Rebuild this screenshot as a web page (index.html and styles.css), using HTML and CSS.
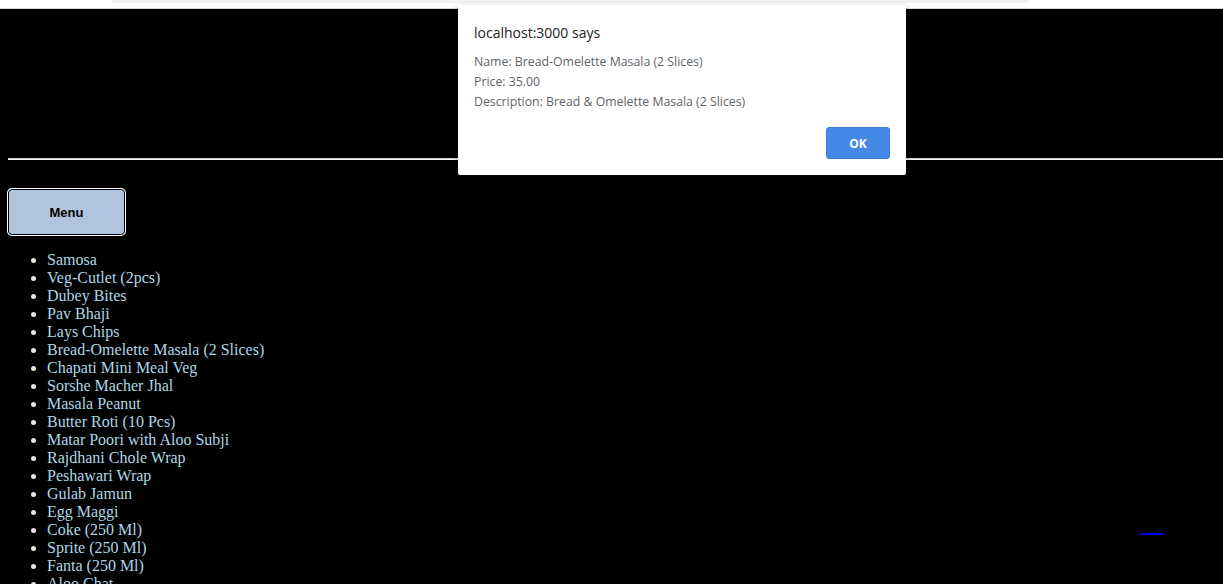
FILE: index.html
```html
<!DOCTYPE html>
<html>
<head>
<meta charset="utf-8">
<link rel="stylesheet" href="styles.css">
</head>
<body>
<div class="chrome"><div class="chrome-bar"></div></div>
<main class="page">
  <header class="header"></header>
  <hr class="rule">
  <button class="menu-btn">Menu</button>
  <ul class="items">
    <li>Samosa</li>
    <li>Veg-Cutlet (2pcs)</li>
    <li>Dubey Bites</li>
    <li>Pav Bhaji</li>
    <li>Lays Chips</li>
    <li>Bread-Omelette Masala (2 Slices)</li>
    <li>Chapati Mini Meal Veg</li>
    <li>Sorshe Macher Jhal</li>
    <li>Masala Peanut</li>
    <li>Butter Roti (10 Pcs)</li>
    <li>Matar Poori with Aloo Subji</li>
    <li>Rajdhani Chole Wrap</li>
    <li>Peshawari Wrap</li>
    <li>Gulab Jamun</li>
    <li>Egg Maggi</li>
    <li>Coke (250 Ml)</li>
    <li>Sprite (250 Ml)</li>
    <li>Fanta (250 Ml)</li>
    <li>Aloo Chat</li>
  </ul>
</main>
<a class="stray-link" href="#"></a>
<div class="dialog">
  <div class="dialog-title">localhost:3000 says</div>
  <div class="dialog-body">
    <p>Name: Bread-Omelette Masala (2 Slices)</p>
    <p>Price: 35.00</p>
    <p>Description: Bread &amp; Omelette Masala (2 Slices)</p>
  </div>
  <div class="dialog-actions"><button class="ok-btn">OK</button></div>
</div>
</body>
</html>
```
FILE: styles.css
```css
html, body {
  margin: 0;
  padding: 0;
  background: #000;
  height: 584px;
  overflow: hidden;
}
body {
  font-family: "Liberation Serif", "Times New Roman", serif;
  position: relative;
}
.chrome {
  height: 8px;
  background: #fff;
  border-bottom: 1px solid #d8d8d8;
  display: flex;
}
.chrome-bar {
  margin-left: 112px;
  width: 916px;
  height: 3px;
  background: #eff1f3;
  border-radius: 0 0 8px 8px;
}
.page {
  padding-left: 8px;
}
.header {
  height: 149px;
}
.rule {
  margin: 0;
  border: none;
  border-top: 1px solid #d0d0d0;
  border-bottom: 1px solid #f4f4f4;
  height: 0;
}
.menu-btn {
  display: block;
  margin: 29px 0 0 0;
  width: 117px;
  height: 46px;
  background: #b0c4de;
  border: 1px solid #000;
  border-radius: 4px;
  font-family: "Liberation Sans", Arial, sans-serif;
  font-weight: bold;
  font-size: 13px;
  color: #000;
  box-shadow: 0 0 0 1px #fff;
  outline: none;
}
.items {
  margin: 16px 0 0;
  padding-left: 39px;
  font-size: 16px;
  line-height: 18px;
  color: #add8e6;
}
.items li::marker {
  color: #e6e6e6;
}
.stray-link {
  position: absolute;
  left: 1139px;
  top: 533px;
  width: 25px;
  height: 2px;
  background: #0000ee;
}
.dialog {
  position: absolute;
  left: 458px;
  top: 5px;
  width: 448px;
  height: 170px;
  box-sizing: border-box;
  background: #fff;
  border-radius: 2px;
  box-shadow: 0 2px 6px rgba(0,0,0,0.3);
  padding: 20px 16px 0 16px;
  font-family: "Open Sans", "Noto Sans", sans-serif;
  display: flex;
  flex-direction: column;
}
.dialog-title {
  font-size: 14px;
  line-height: 16px;
  color: #202124;
}
.dialog-body {
  margin-top: 11px;
  font-size: 12.3px;
  line-height: 20px;
  color: #5f6368;
}
.dialog-body p {
  margin: 0;
}
.dialog-actions {
  display: flex;
  justify-content: flex-end;
  margin-top: 15px;
}
.ok-btn {
  width: 64px;
  height: 32px;
  background: #4489e8;
  color: #fff;
  border: 1px solid #3c7fdc;
  border-radius: 3px;
  font-family: "Open Sans", "Noto Sans", sans-serif;
  font-weight: bold;
  font-size: 12px;
}
```
